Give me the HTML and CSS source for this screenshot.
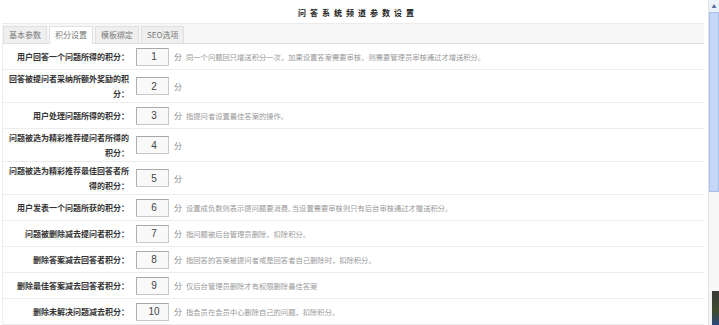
FILE: index.html
```html
<!DOCTYPE html>
<html lang="zh-CN">
<head>
    <meta charset="UTF-8">
    <title>问答系统频道参数设置</title>
    <link rel="stylesheet" href="styles.css">
</head>
<body>
    <div class="page">
        <div class="main">
            <div class="title">问答系统频道参数设置</div>

            <div class="tabs">
                <span class="tab">基本参数</span>
                <span class="tab active">积分设置</span>
                <span class="tab">模板绑定</span>
                <span class="tab">SEO选项</span>
            </div>

            <div class="rows">
                <div class="row">
                    <div class="label">用户回答一个问题所得的积分：</div>
                    <div class="field"><input type="text" value="1"><span class="unit">分</span><span class="note">同一个问题回只增送积分一次，加果设置答案需要审核，则需要管理员审核通过才增送积分。</span></div>
                </div>
                <div class="row">
                    <div class="label">回答被提问者采纳所额外奖励的积分：</div>
                    <div class="field"><input type="text" value="2"><span class="unit">分</span></div>
                </div>
                <div class="row">
                    <div class="label">用户处理问题所得的积分：</div>
                    <div class="field"><input type="text" value="3"><span class="unit">分</span><span class="note">指提问者设置最佳答案的操作。</span></div>
                </div>
                <div class="row">
                    <div class="label">问题被选为精彩推荐提问者所得的积分：</div>
                    <div class="field"><input type="text" value="4"><span class="unit">分</span></div>
                </div>
                <div class="row">
                    <div class="label">问题被选为精彩推荐最佳回答者所得的积分：</div>
                    <div class="field"><input type="text" value="5"><span class="unit">分</span></div>
                </div>
                <div class="row">
                    <div class="label">用户发表一个问题所获的积分：</div>
                    <div class="field"><input type="text" value="6"><span class="unit">分</span><span class="note">设置成负数则表示提问题要消费, 当设置需要审核则只有后台审核通过才赠送积分。</span></div>
                </div>
                <div class="row">
                    <div class="label">问题被删除减去提问者积分：</div>
                    <div class="field"><input type="text" value="7"><span class="unit">分</span><span class="note">指问题被后台管理员删除，扣除积分。</span></div>
                </div>
                <div class="row">
                    <div class="label">删除答案减去回答者积分：</div>
                    <div class="field"><input type="text" value="8"><span class="unit">分</span><span class="note">指回答的答案被提问者或是回答者自己删除时，扣除积分。</span></div>
                </div>
                <div class="row">
                    <div class="label">删除最佳答案减去回答者积分：</div>
                    <div class="field"><input type="text" value="9"><span class="unit">分</span><span class="note">仅后台管理员删除才有权限删除最佳答案</span></div>
                </div>
                <div class="row">
                    <div class="label">删除未解决问题减去积分：</div>
                    <div class="field"><input type="text" value="10"><span class="unit">分</span><span class="note">指会员在会员中心删除自己的问题，扣除积分。</span></div>
                </div>
            </div>
        </div>

        <div class="scrollbar">
            <div class="arrow up">&#9650;</div>
            <div class="thumb"></div>
            <div class="track"></div>
            <div class="corner"></div>
        </div>
    </div>
</body>
</html>
```

FILE: styles.css
```css
body {
    margin: 0;
    font-family: "Noto Sans CJK SC", "Liberation Sans", sans-serif;
    font-size: 8px;
    color: #333;
    background-color: #fff;
    overflow: hidden;
}
.page {
    display: flex;
    height: 325px;
}
.main {
    flex: 1;
    padding: 0 4px 0 2px;
    overflow: hidden;
}
.title {
    height: 23px;
    line-height: 25px;
    text-align: center;
    font-weight: bold;
    letter-spacing: 4px;
    padding-left: 10px;
    color: #222;
}
.tabs {
    height: 21px;
    box-sizing: border-box;
    display: flex;
    align-items: flex-end;
    gap: 2px;
    padding-left: 1px;
    background-color: #f7f7f7;
    border-top: 1px solid #ececec;
    border-bottom: 1px solid #dedede;
}
.tab {
    height: 16px;
    line-height: 16px;
    padding: 0 5px;
    background-color: #efefef;
    border: 1px solid #e0e0e0;
    border-bottom: none;
    color: #777;
}
.tab.active {
    background-color: #fff;
    height: 17px;
    margin-bottom: -1px;
}
.rows {
    border-left: 1px solid #eee;
}
.row {
    display: grid;
    grid-template-columns: 126px 1fr;
    column-gap: 7px;
    align-items: center;
    min-height: 26px;
    box-sizing: border-box;
    padding: 1px 0;
    border-bottom: 1px solid #ececec;
}
.label {
    text-align: right;
    font-weight: bold;
    line-height: 15px;
    padding-left: 5px;
    color: #333;
}
.field {
    display: flex;
    align-items: center;
}
input {
    width: 33px;
    height: 18px;
    box-sizing: border-box;
    padding: 0 0 0 3px;
    border: 1px solid #c8c8c8;
    border-top-color: #a8a8a8;
    border-left-color: #b0b0b0;
    background-color: #f9f9f9;
    font-family: "Liberation Sans", Arial, sans-serif;
    font-size: 10px;
    color: #444;
    text-align: center;
}
.unit {
    margin-left: 5px;
    color: #888;
}
.note {
    margin-left: 4px;
    font-size: 7.3px;
    color: #999;
}
.scrollbar {
    width: 10px;
    display: flex;
    flex-direction: column;
    background-color: #f3f3f3;
    border-left: 1px solid #e6e6e6;
}
.arrow {
    height: 12px;
    line-height: 12px;
    text-align: center;
    font-size: 5px;
    color: #5a6e9a;
    background-color: #eef2fa;
}
.thumb {
    height: 180px;
    background-color: #c6d6f6;
    border: 1px solid #a9bfeb;
    box-sizing: border-box;
}
.track {
    flex: 1;
    background-color: #f7f7f7;
}
.corner {
    height: 34px;
    margin-left: 3px;
    background: linear-gradient(#3a3a3a, #3e4a2e 60%, #2b4b7a);
}
```
